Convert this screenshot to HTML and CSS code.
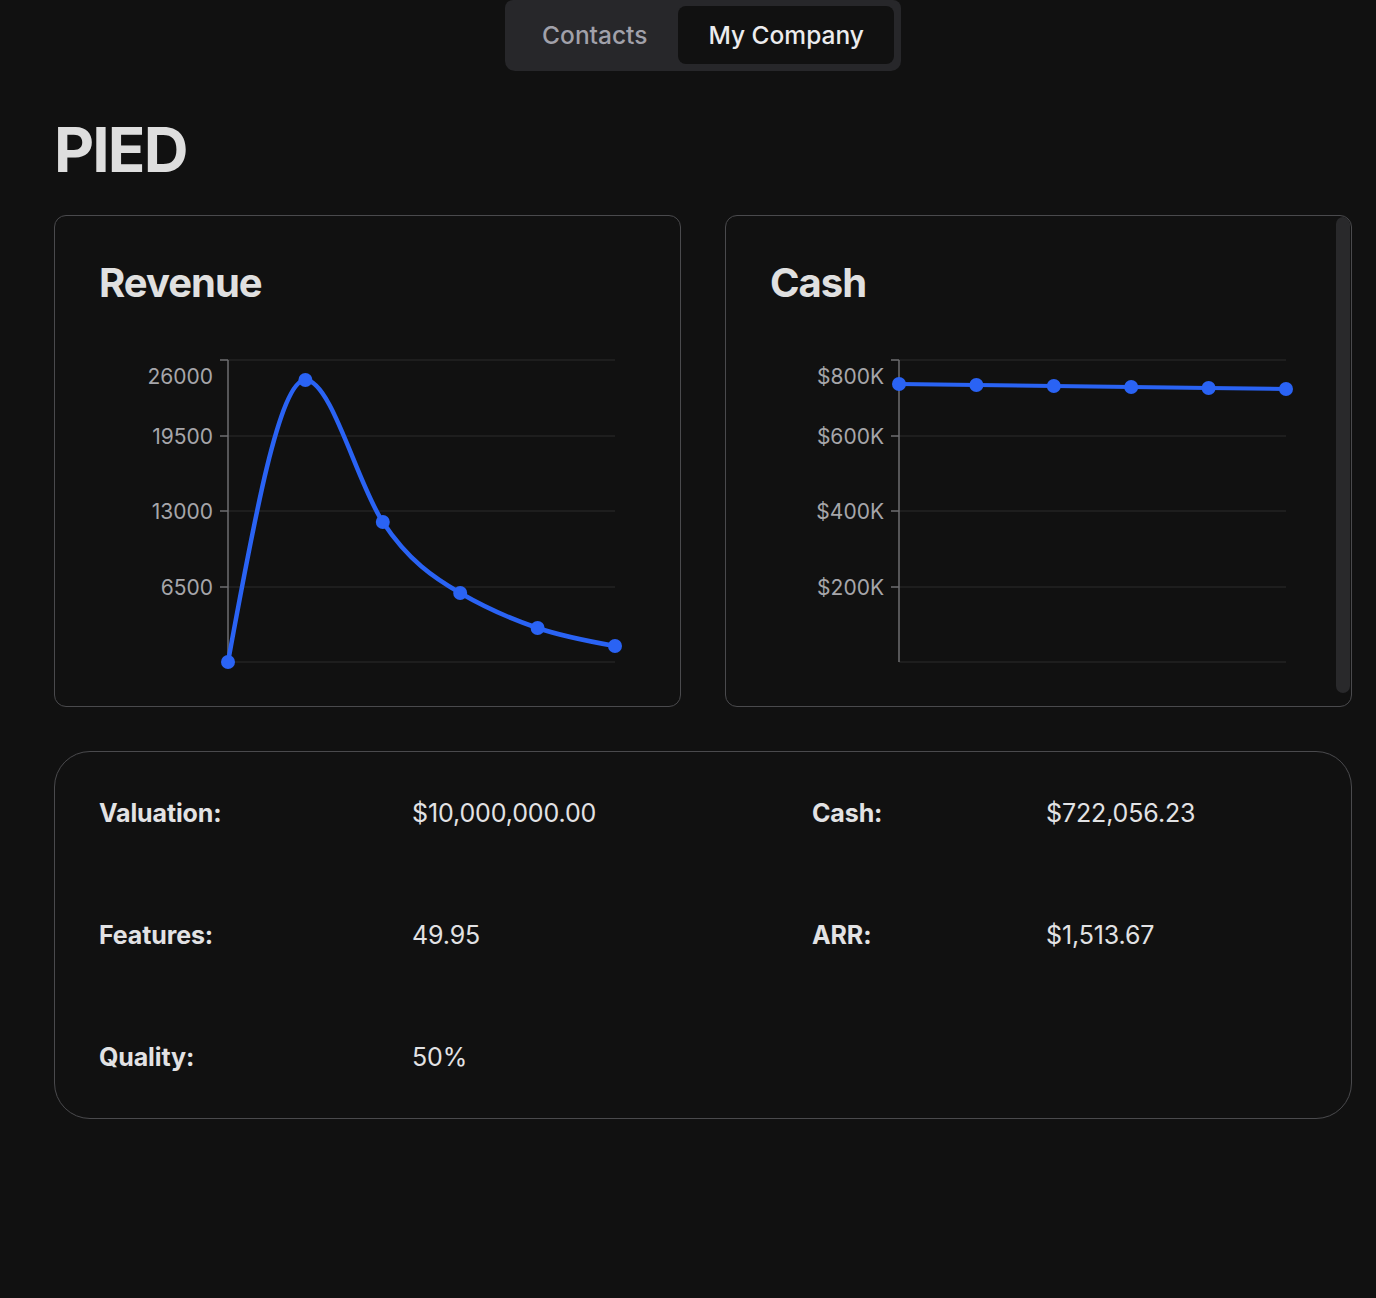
FILE: index.html
```html
<!DOCTYPE html>
<html lang="en">
<head>
<meta charset="utf-8">
<title>PIED</title>
<link rel="stylesheet" href="styles.css">
</head>
<body>
<div class="page">
  <nav class="tabs">
    <button class="tab">Contacts</button>
    <button class="tab active">My Company</button>
  </nav>

  <h1 class="company">PIED</h1>

  <section class="charts">
    <div class="card">
      <h2 class="card-title">Revenue</h2>
      <svg class="chart" width="539" height="345" viewBox="0 0 539 345">
        <g class="grid">
          <line x1="129" y1="20" x2="516" y2="20"/>
          <line x1="129" y1="96" x2="516" y2="96"/>
          <line x1="129" y1="171" x2="516" y2="171"/>
          <line x1="129" y1="247" x2="516" y2="247"/>
          <line x1="129" y1="322" x2="516" y2="322"/>
        </g>
        <g class="axis">
          <line x1="129" y1="20" x2="129" y2="322"/>
          <line x1="121" y1="20" x2="129" y2="20"/>
          <line x1="121" y1="96" x2="129" y2="96"/>
          <line x1="121" y1="171" x2="129" y2="171"/>
          <line x1="121" y1="247" x2="129" y2="247"/>
        </g>
        <g class="labels">
          <text x="114" y="36">26000</text>
          <text x="114" y="96">19500</text>
          <text x="114" y="171">13000</text>
          <text x="114" y="247">6500</text>
        </g>
        <path class="line" d="M129,322 C154.8,181 180.6,40 206.4,40 C232.2,40 258,143 283.8,182 C309.6,221 335.4,238 361.2,253 C387,268 412.8,279.2 438.6,288 C464.4,296.8 490.2,301.4 516,306"/>
        <g class="dots">
          <circle cx="129" cy="322" r="7"/>
          <circle cx="206.4" cy="40" r="7"/>
          <circle cx="283.8" cy="182" r="7"/>
          <circle cx="361.2" cy="253" r="7"/>
          <circle cx="438.6" cy="288" r="7"/>
          <circle cx="516" cy="306" r="7"/>
        </g>
      </svg>
    </div>

    <div class="card">
      <h2 class="card-title">Cash</h2>
      <svg class="chart" width="539" height="345" viewBox="0 0 539 345">
        <g class="grid">
          <line x1="129" y1="20" x2="516" y2="20"/>
          <line x1="129" y1="96" x2="516" y2="96"/>
          <line x1="129" y1="171" x2="516" y2="171"/>
          <line x1="129" y1="247" x2="516" y2="247"/>
          <line x1="129" y1="322" x2="516" y2="322"/>
        </g>
        <g class="axis">
          <line x1="129" y1="20" x2="129" y2="322"/>
          <line x1="121" y1="20" x2="129" y2="20"/>
          <line x1="121" y1="96" x2="129" y2="96"/>
          <line x1="121" y1="171" x2="129" y2="171"/>
          <line x1="121" y1="247" x2="129" y2="247"/>
        </g>
        <g class="labels">
          <text x="114" y="36">$800K</text>
          <text x="114" y="96">$600K</text>
          <text x="114" y="171">$400K</text>
          <text x="114" y="247">$200K</text>
        </g>
        <path class="line thin" d="M129,44 L206.4,45 L283.8,46 L361.2,47 L438.6,48 L516,49"/>
        <g class="dots">
          <circle cx="129" cy="44" r="7"/>
          <circle cx="206.4" cy="45" r="7"/>
          <circle cx="283.8" cy="46" r="7"/>
          <circle cx="361.2" cy="47" r="7"/>
          <circle cx="438.6" cy="48" r="7"/>
          <circle cx="516" cy="49" r="7"/>
        </g>
      </svg>
      <div class="scrollbar"></div>
    </div>
  </section>

  <section class="stats">
    <div class="stat-label">Valuation:</div>
    <div class="stat-value">$10,000,000.00</div>
    <div class="stat-label">Cash:</div>
    <div class="stat-value">$722,056.23</div>

    <div class="stat-label">Features:</div>
    <div class="stat-value">49.95</div>
    <div class="stat-label">ARR:</div>
    <div class="stat-value">$1,513.67</div>

    <div class="stat-label">Quality:</div>
    <div class="stat-value">50%</div>
  </section>
</div>
</body>
</html>
```

FILE: styles.css
```css
* {
  box-sizing: border-box;
}

html, body {
  margin: 0;
  padding: 0;
  background: #111111;
}

body {
  font-family: Inter, "Noto Sans", "Liberation Sans", sans-serif;
  color: #e2e2e4;
  height: 1298px;
  overflow: hidden;
}

.page {
  padding: 0 24px 0 54px;
}

.tabs {
  display: flex;
  width: max-content;
  margin: 0 auto;
  padding: 6px 7px 7px 6px;
  background: #27272a;
  border-radius: 8px 8px 10px 10px;
}

.tab {
  font-family: inherit;
  font-size: 24.5px;
  font-weight: 500;
  height: 58px;
  padding: 0 31px;
  border: none;
  background: transparent;
  color: #a1a1aa;
  border-radius: 8px;
  letter-spacing: 0;
}

.tab.active {
  padding: 0 30px;
  background: #111111;
  color: #ececee;
}

.company {
  margin: 48px 0 34px 0;
  font-size: 62px;
  line-height: 1;
  font-weight: 700;
  letter-spacing: -0.03em;
  color: #dedede;
}

.charts {
  display: grid;
  grid-template-columns: minmax(0, 1fr) minmax(0, 1fr);
  gap: 44px;
}

.card {
  position: relative;
  border: 1px solid #4a4a4d;
  border-radius: 12px;
  padding: 47px 44px 20px 44px;
  height: 492px;
  overflow: hidden;
}

.card-title {
  margin: 0 0 37px 0;
  font-size: 40px;
  line-height: 40px;
  font-weight: 700;
  letter-spacing: -0.025em;
  color: #e0e0e0;
}

.chart {
  display: block;
  overflow: visible;
}

.grid line {
  stroke: #232323;
  stroke-width: 1.5;
}

.axis line {
  stroke: #6e6e70;
  stroke-width: 1.5;
}

.labels text {
  font-family: Inter, "Noto Sans", "Liberation Sans", sans-serif;
  font-size: 21px;
  fill: #a6a6aa;
  text-anchor: end;
  dominant-baseline: central;
}

.line {
  fill: none;
  stroke: #2a63f4;
  stroke-width: 4.5;
  stroke-linecap: round;
  stroke-linejoin: round;
}

.line.thin {
  stroke-width: 4;
}

.dots circle {
  fill: #2a63f4;
}

.scrollbar {
  position: absolute;
  top: 1px;
  right: 1px;
  bottom: 13px;
  width: 14px;
  background: #29292b;
  border-radius: 8px;
}

.stats {
  margin-top: 44px;
  border: 1px solid #4a4a4d;
  border-radius: 36px;
  padding: 0 44px;
  display: grid;
  grid-template-columns: 313px 400px 234px 1fr;
  grid-auto-rows: 122px;
  align-items: center;
  font-size: 25px;
}

.stat-label {
  font-weight: 700;
  color: #e2e2e4;
  letter-spacing: -0.005em;
}

.stat-value {
  font-weight: 400;
  color: #e2e2e4;
  letter-spacing: -0.005em;
}
```
